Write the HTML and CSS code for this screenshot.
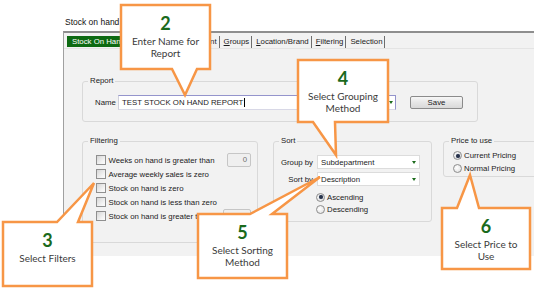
FILE: index.html
```html
<!DOCTYPE html>
<html>
<head>
<meta charset="utf-8">
<link rel="stylesheet" href="styles.css">
</head>
<body>
<div class="page">
  <div class="title">Stock on hand</div>
  <div class="window">
    <div class="tabs">
      <span class="tab active">Stock On Hand</span>
      <span class="tab">Report</span>
      <span class="tab">Subdepartment</span>
      <span class="tab"><u>G</u>roups</span>
      <span class="tab"><u>L</u>ocation/Brand</span>
      <span class="tab"><u>F</u>iltering</span>
      <span class="tab">Selection</span>
    </div>
    <div class="content">
      <fieldset class="report">
        <legend>Report</legend>
        <div class="name-row">
          <span class="name-label">Name</span>
          <div class="combo name-combo">
            <span class="combo-text">TEST STOCK ON HAND REPORT</span><span class="caret"></span>
            <span class="arrow"></span>
          </div>
          <div class="button">Save</div>
        </div>
      </fieldset>
      <div class="row2">
        <fieldset class="filtering">
          <legend>Filtering</legend>
          <div class="check-row"><span class="check"></span><span>Weeks on hand is greater than</span><span class="num-input">0</span></div>
          <div class="check-row"><span class="check"></span><span>Average weekly sales is zero</span></div>
          <div class="check-row"><span class="check"></span><span>Stock on hand is zero</span></div>
          <div class="check-row"><span class="check"></span><span>Stock on hand is less than zero</span></div>
          <div class="check-row"><span class="check"></span><span>Stock on hand is greater than</span><span class="num-input wide"></span></div>
        </fieldset>
        <fieldset class="sort">
          <legend>Sort</legend>
          <div class="sort-grid">
            <span class="field-label">Group by</span>
            <div class="combo small-combo"><span class="combo-text">Subdepartment</span><span class="arrow"></span></div>
            <span class="field-label">Sort by</span>
            <div class="combo small-combo"><span class="combo-text">Description</span><span class="arrow"></span></div>
          </div>
          <div class="radios sort-radios">
            <div class="radio-row"><span class="radio on"></span><span>Ascending</span></div>
            <div class="radio-row"><span class="radio"></span><span>Descending</span></div>
          </div>
        </fieldset>
        <fieldset class="price">
          <legend>Price to use</legend>
          <div class="radios price-radios">
            <div class="radio-row"><span class="radio on"></span><span>Current Pricing</span></div>
            <div class="radio-row"><span class="radio"></span><span>Normal Pricing</span></div>
          </div>
        </fieldset>
      </div>
    </div>
  </div>

  <svg class="callouts" width="534" height="291" viewBox="0 0 534 291">
    <path d="M121,5 H210 V69 H197 L185,95 L172,69 H121 Z"/>
    <path d="M298,60 H388 V122 H335 L336,155 L313,122 H298 Z"/>
    <path d="M3,222 H57 L94,183 L78,222 H92 V286 H3 Z"/>
    <path d="M198,214 H250 L320,177 L272,214 H287 V278 H198 Z"/>
    <path d="M442,208 H457 L470,175 L479,208 H530 V269 H442 Z"/>
  </svg>

  <div class="note n2"><div class="num">2</div><div class="txt">Enter Name for<br>Report</div></div>
  <div class="note n4"><div class="num">4</div><div class="txt">Select Grouping<br>Method</div></div>
  <div class="note n3"><div class="num">3</div><div class="txt">Select Filters</div></div>
  <div class="note n5"><div class="num">5</div><div class="txt">Select Sorting<br>Method</div></div>
  <div class="note n6"><div class="num">6</div><div class="txt">Select Price to<br>Use</div></div>
</div>
</body>
</html>
```

FILE: styles.css
```css
* { box-sizing: border-box; }
html, body { margin: 0; padding: 0; }
body {
  width: 534px;
  height: 291px;
  overflow: hidden;
  background: #ffffff;
  font-family: "Liberation Sans", Arial, sans-serif;
  font-size: 7.8px;
  color: #1b1b1b;
}
.page {
  position: relative;
  width: 534px;
  height: 291px;
  padding-left: 63px;
  padding-top: 17px;
  overflow: hidden;
}
.title {
  font-size: 8.5px;
  line-height: 10px;
  height: 14px;
  margin-left: 2px;
  color: #111;
}
.window {
  width: 520px;
  height: 225px;
  border-top: 2px solid #8e8e8e;
  border-left: 1px solid #a0a0a0;
  background: #f2f2f2;
}
.tabs {
  display: flex;
  align-items: flex-start;
  height: 16px;
  padding-top: 3px;
  padding-left: 3px;
  border-bottom: 1px solid #e4e4e4;
}
.tab {
  flex: none;
  height: 12px;
  line-height: 11px;
  padding: 0 2px 0 4px;
  border-right: 1px solid #6e6e6e;
  white-space: nowrap;
  color: #1b1b1b;
}
.tab.active {
  height: 11px;
  background: #0d6a12;
  color: #ffffff;
  padding: 0 4px 0 5px;
  border-right: none;
}
.content {
  padding-left: 18px;
  padding-top: 27px;
}
fieldset {
  flex: none;
  margin: 0;
  border: 1px solid #d9d9d9;
  border-radius: 3px;
  padding: 0 5px;
  min-width: 0;
}
legend {
  padding: 0 2px;
  font-size: 7.8px;
  line-height: 10px;
  color: #1b1b1b;
}
.report {
  width: 396px;
  padding-top: 9px;
  padding-bottom: 11px;
}
.name-row {
  display: flex;
  align-items: center;
  height: 15px;
  padding-left: 7px;
}
.name-label {
  width: 20px;
  margin-right: 3px;
}
.combo {
  display: flex;
  align-items: center;
  background: #ffffff;
  white-space: nowrap;
}
.name-combo {
  width: 278px;
  height: 15px;
  padding-left: 3px;
  border: 1px solid #9494cc;
  border-left-color: #cfd0dc;
  border-bottom-color: #d8d8e6;
}
.caret {
  width: 1px;
  height: 9px;
  background: #000;
  margin-left: 1px;
}
.arrow {
  margin-left: auto;
  margin-right: 2px;
  width: 0;
  height: 0;
  border-left: 2.5px solid transparent;
  border-right: 2.5px solid transparent;
  border-top: 3px solid #1c6b1c;
}
.button {
  margin-left: 14px;
  width: 53px;
  height: 13px;
  line-height: 11px;
  text-align: center;
  border: 1px solid #8b8b8b;
  border-radius: 2px;
  background: linear-gradient(#f7f7f7, #e6e6e6 50%, #d9d9d9);
}
.row2 {
  display: flex;
  align-items: flex-start;
  margin-top: 14px;
}
.filtering {
  width: 176px;
  padding-top: 7px;
  padding-bottom: 19px;
}
.check-row {
  display: flex;
  align-items: center;
  height: 14px;
  padding-left: 8px;
  padding-right: 1px;
  white-space: nowrap;
}
.check {
  flex: none;
  width: 10px;
  height: 10px;
  margin-right: 2.5px;
  border: 1px solid #8f8f8f;
  background: linear-gradient(135deg, #d6d6d6, #f4f4f4 70%, #fbfbfb);
}
.num-input {
  flex: none;
  margin-left: auto;
  width: 24px;
  height: 14px;
  line-height: 12px;
  text-align: right;
  padding-right: 3px;
  color: #707070;
  border: 1px solid #c6c6c6;
  border-radius: 2px;
  background: #efefef;
}
.num-input.wide { width: 28px; }
.sort {
  margin-left: 15px;
  width: 159px;
  padding-top: 9px;
  padding-bottom: 6px;
}
.sort-grid {
  display: grid;
  grid-template-columns: 34px 103px;
  column-gap: 4px;
  row-gap: 3px;
  align-items: center;
}
.field-label {
  text-align: right;
  white-space: nowrap;
}
.small-combo {
  height: 14px;
  padding-left: 3px;
  border: 1px solid #dcdcdc;
}
.small-combo .arrow { margin-right: 3px; }
.radios { display: flex; flex-direction: column; }
.sort-radios { margin-top: 5px; padding-left: 37px; }
.sort-radios .radio-row { height: 12px; }
.price {
  margin-left: 11px;
  width: 130px;
  padding-top: 3px;
  padding-bottom: 1px;
}
.price-radios { padding-left: 4px; }
.price-radios .radio-row { height: 13px; }
.radio-row {
  display: flex;
  align-items: center;
  white-space: nowrap;
}
.radio {
  flex: none;
  width: 9px;
  height: 9px;
  margin-right: 2px;
  border-radius: 50%;
  border: 1px solid #8d8d8d;
  background: radial-gradient(circle at 40% 40%, #ffffff, #dcdcdc);
  display: flex;
  align-items: center;
  justify-content: center;
}
.radio.on::after {
  content: "";
  width: 4px;
  height: 4px;
  border-radius: 50%;
  background: #27324a;
  box-shadow: 0 0 1px #6a7a96;
}
.callouts {
  position: absolute;
  left: 0;
  top: 0;
}
.callouts path {
  fill: #ffffff;
  stroke: #f79646;
  stroke-width: 2.5;
  stroke-linejoin: miter;
}
.note {
  position: absolute;
  text-align: center;
  font-family: Lato, "Open Sans", sans-serif;
  font-size: 10px;
  color: #3b3b3b;
}
.note .num {
  font-size: 18px;
  font-weight: 700;
  line-height: 20px;
  color: #1a6a1c;
}
.note .txt {
  line-height: 12.5px;
  margin-top: 2px;
}
.n2 { left: 121px; top: 12.5px; width: 89px; }
.n4 { left: 298px; top: 67.5px; width: 90px; }
.n3 { left: 3px; top: 229.5px; width: 89px; }
.n5 { left: 198px; top: 221.5px; width: 89px; }
.n6 { left: 442px; top: 215.5px; width: 88px; }
```
